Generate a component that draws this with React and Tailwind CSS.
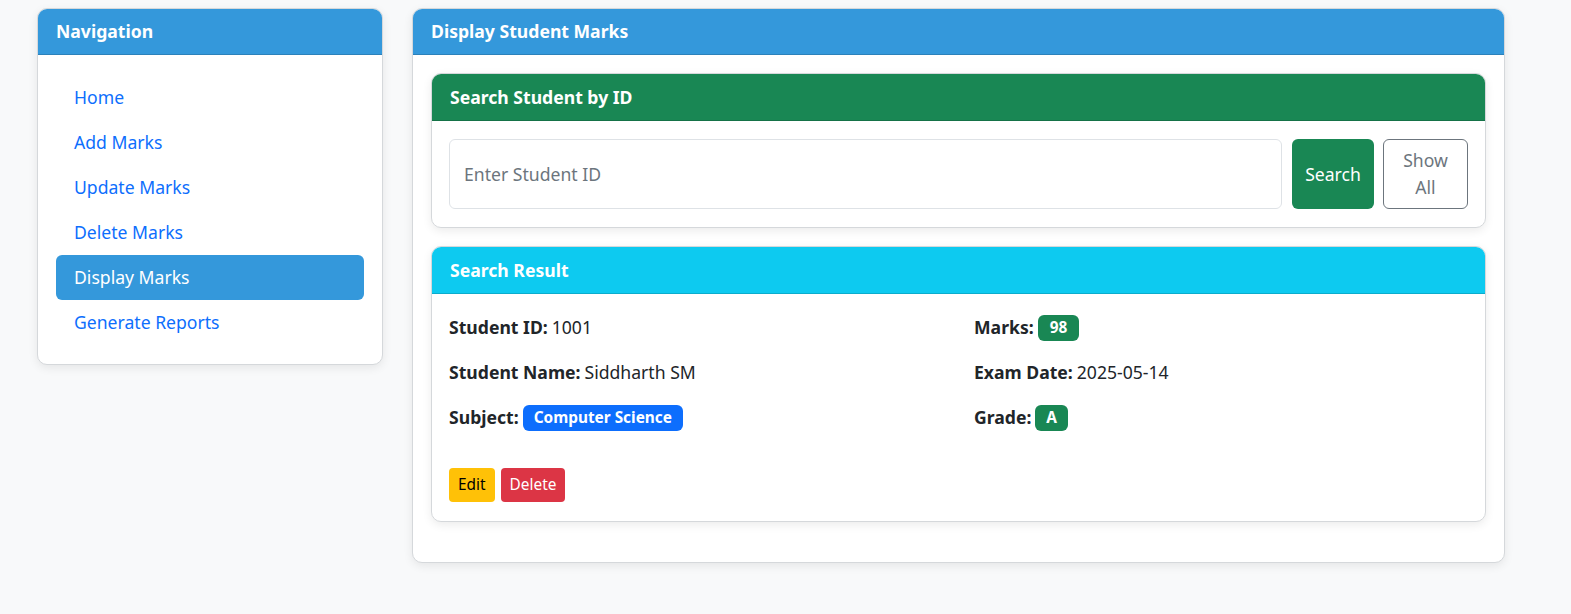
import React from 'react'

const navItems = ['Home', 'Add Marks', 'Update Marks', 'Delete Marks', 'Display Marks', 'Generate Reports']

function Card({ title, headerClass, children, bodyClass }) {
    return (
        <div className="bg-white border border-[#d5d8db] rounded-[10px] overflow-hidden shadow-[0_3px_10px_rgba(0,0,0,0.08)]">
            <div className={`px-[18px] flex items-center font-bold text-white border-b border-black/15 ${headerClass}`}>
                {title}
            </div>
            <div className={bodyClass}>{children}</div>
        </div>
    )
}

function Field({ label, children }) {
    return (
        <div className="h-[45px] flex items-center gap-[4px] text-[#212529]">
            <span className="font-bold">{label}</span>
            {children}
        </div>
    )
}

const badge = 'text-white text-[15.4px] font-bold h-[26px] flex items-center rounded-[6px]'

export default function App() {
    return (
        <div className="min-h-screen bg-[#f8f9fa] font-['Noto_Sans',sans-serif] text-[17.6px]">
            <div className="flex items-start gap-[29px] pl-[37px] pt-[8px]">
                <div className="w-[346px] shrink-0">
                    <Card title="Navigation" headerClass="bg-[#3498db] h-[46px]" bodyClass="px-[18px] pt-[20px] pb-[19px]">
                        <ul className="flex flex-col">
                            {navItems.map((item) => (
                                <li key={item}>
                                    <a className={`h-[45px] flex items-center px-[18px] rounded-[6px] ${item === 'Display Marks' ? 'bg-[#3498db] text-white' : 'text-[#0d6efd]'}`}>
                                        {item}
                                    </a>
                                </li>
                            ))}
                        </ul>
                    </Card>
                </div>

                <div className="w-[1093px] shrink-0">
                    <Card title="Display Student Marks" headerClass="bg-[#3498db] h-[46px]" bodyClass="px-[18px] pt-[18px] pb-[40px]">
                        <Card title="Search Student by ID" headerClass="bg-[#198754] h-[47px]" bodyClass="px-[17px] pt-[18px] pb-[18px]">
                            <div className="flex items-stretch">
                                <input placeholder="Enter Student ID" className="flex-1 min-w-0 px-[14px] border border-[#dee2e6] rounded-[6px] placeholder:text-[#6c757d] outline-none" />
                                <button className="ml-[10px] w-[82px] bg-[#198754] text-white rounded-[6px]">Search</button>
                                <button className="ml-[9px] w-[85px] h-[70px] border border-[#6c757d] text-[#6c757d] rounded-[6px] leading-[27px]">Show<br />All</button>
                            </div>
                        </Card>
                        <div className="h-[18px]" />
                        <Card title="Search Result" headerClass="bg-[#0dcaf0] h-[47px]" bodyClass="px-[17px] pt-[11px] pb-[19px]">
                            <div className="grid grid-cols-2 gap-x-[31px]">
                                <div>
                                    <Field label="Student ID:">1001</Field>
                                    <Field label="Student Name:">Siddharth SM</Field>
                                    <Field label="Subject:">
                                        <span className={`bg-[#0d6efd] px-[11px] ${badge}`}>Computer Science</span>
                                    </Field>
                                </div>
                                <div>
                                    <Field label="Marks:">
                                        <span className={`bg-[#198754] px-[12px] ${badge}`}>98</span>
                                    </Field>
                                    <Field label="Exam Date:">2025-05-14</Field>
                                    <Field label="Grade:">
                                        <span className={`bg-[#198754] px-[11px] ${badge}`}>A</span>
                                    </Field>
                                </div>
                            </div>
                            <div className="flex gap-[6px] mt-[28px]">
                                <button className="h-[34px] px-[9px] bg-[#ffc107] text-black text-[15.4px] rounded-[4px]">Edit</button>
                                <button className="h-[34px] px-[9px] bg-[#dc3545] text-white text-[15.4px] rounded-[4px]">Delete</button>
                            </div>
                        </Card>
                    </Card>
                </div>
            </div>
        </div>
    )
}
